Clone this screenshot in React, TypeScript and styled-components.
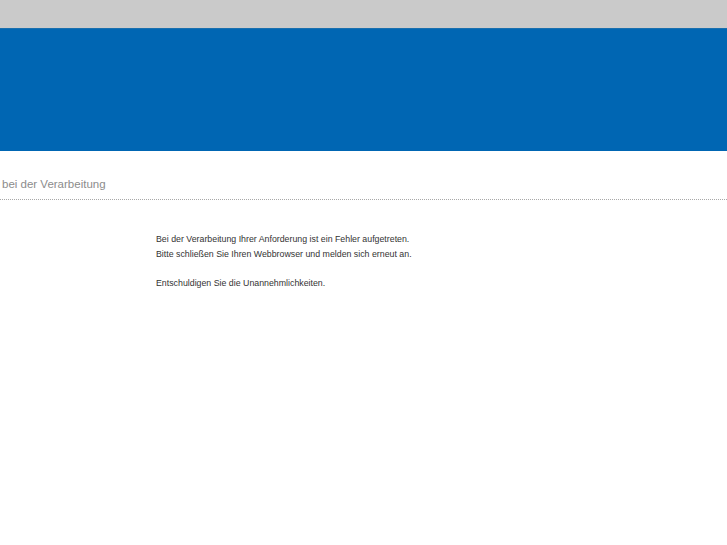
import React from "react";
import styled, { createGlobalStyle } from "styled-components";

const GlobalStyle = createGlobalStyle`
  html, body {
    margin: 0;
    padding: 0;
    background: #fff;
  }
  body {
    font-family: "Liberation Sans", Arial, sans-serif;
  }
`;

const TopBar = styled.div`
  height: 28px;
  background: #cacaca;
`;

const Banner = styled.div`
  height: 123px;
  background: #0066b3;
  border-top: 1px solid #1a6fae;
  box-sizing: border-box;
`;

const TitleRow = styled.div`
  padding: 26px 0 0 2px;
  height: 49px;
  box-sizing: border-box;
  border-bottom: 1px dotted #a8a8a8;
`;

const Title = styled.h1`
  margin: 0;
  font-size: 11.5px;
  font-weight: normal;
  color: #8c8c8c;
  line-height: 14px;
`;

const Content = styled.div`
  padding: 32px 0 0 156px;
`;

const Message = styled.p`
  margin: 0;
  font-size: 8.8px;
  line-height: 14.5px;
  color: #333;
`;

export default function App() {
  return (
    <>
      <GlobalStyle />
      <TopBar />
      <Banner />
      <TitleRow>
        <Title>bei der Verarbeitung</Title>
      </TitleRow>
      <Content>
        <Message>
          Bei der Verarbeitung Ihrer Anforderung ist ein Fehler aufgetreten.
          <br />
          Bitte schließen Sie Ihren Webbrowser und melden sich erneut an.
          <br />
          <br />
          Entschuldigen Sie die Unannehmlichkeiten.
        </Message>
      </Content>
    </>
  );
}
